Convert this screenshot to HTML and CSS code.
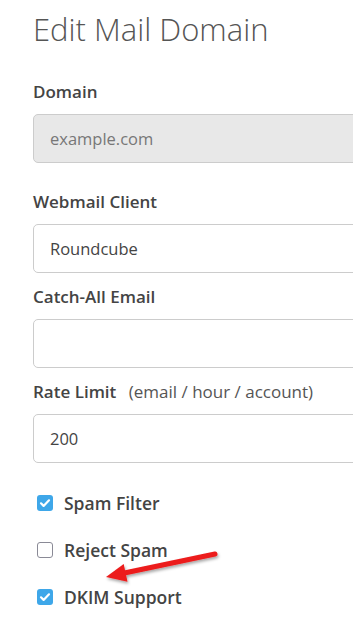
FILE: index.html
```html
<!DOCTYPE html>
<html lang="en">
<head>
  <meta charset="UTF-8" />
  <meta name="viewport" content="width=device-width, initial-scale=1.0" />
  <title>Edit Mail Domain</title>
  <link rel="stylesheet" href="styles.css">
</head>
<body>
  <div class="page">
    <h1>Edit Mail Domain</h1>

    <div class="field field-first">
      <label for="domain">Domain</label>
      <input type="text" id="domain" value="example.com" disabled />
    </div>

    <div class="field field-second">
      <label for="webmail">Webmail Client</label>
      <input type="text" id="webmail" value="Roundcube" />
    </div>

    <div class="field">
      <label for="catchall">Catch-All Email</label>
      <input type="text" id="catchall" value="" />
    </div>

    <div class="field">
      <label for="rate">Rate Limit <span class="hint">(email / hour / account)</span></label>
      <input type="text" id="rate" value="200" />
    </div>

    <div class="checks">
      <label class="check"><span class="box on"><svg viewBox="0 0 16 16"><path d="M4 8.3l2.6 2.6L12 5.3" /></svg></span>Spam Filter</label>
      <label class="check"><span class="box"></span>Reject Spam</label>
      <label class="check"><span class="box on"><svg viewBox="0 0 16 16"><path d="M4 8.3l2.6 2.6L12 5.3" /></svg></span>DKIM Support</label>
    </div>
  </div>

  <svg class="arrow" width="160" height="60" viewBox="0 0 160 60">
    <defs>
      <filter id="shadow" x="-20%" y="-40%" width="140%" height="180%">
        <feDropShadow dx="1" dy="2" stdDeviation="1.5" flood-color="#000" flood-opacity="0.35" />
      </filter>
    </defs>
    <g filter="url(#shadow)">
      <line x1="143" y1="12" x2="50" y2="31.5" stroke="#ec1c1c" stroke-width="5" stroke-linecap="round" />
      <polygon points="34,35 51.7,22.1 55.5,39.7" fill="#ec1c1c" />
    </g>
  </svg>
</body>
</html>
```

FILE: styles.css
```css
html, body {
  margin: 0;
  padding: 0;
  background: #fff;
  overflow: hidden;
}
body {
  font-family: "Open Sans", Arial, sans-serif;
  color: #444;
  position: relative;
  width: 353px;
  height: 626px;
}
.page {
  padding: 0 0 0 33px;
}
h1 {
  font-size: 31px;
  font-weight: 300;
  color: #555;
  margin: 0;
  padding-top: 9px;
  line-height: 40px;
}
.field {
  margin-top: 12px;
}
.field-first {
  margin-top: 31px;
}
.field-second {
  margin-top: 27px;
}
.field label {
  display: block;
  font-size: 17px;
  font-weight: 600;
  line-height: 24px;
  margin-bottom: 10px;
  color: #444;
}
.field .hint {
  font-weight: 400;
  color: #555;
  margin-left: 8px;
}
.field input {
  display: block;
  box-sizing: border-box;
  width: 360px;
  height: 49px;
  padding: 0 16px;
  border: 1px solid #ccc;
  border-radius: 5px;
  font-family: inherit;
  font-size: 16.5px;
  color: #444;
  background: #fff;
}
.field input:disabled {
  background: #e8e8e8;
  color: #777;
}
.checks {
  padding-top: 28px;
  display: flex;
  flex-direction: column;
  gap: 23px;
}
.check {
  display: flex;
  align-items: center;
  height: 24px;
  font-size: 17.5px;
  font-weight: 600;
  color: #444;
}
.box {
  box-sizing: border-box;
  width: 16px;
  height: 16px;
  margin: 0 11px 0 4px;
  border: 1.5px solid #8a8a96;
  border-radius: 3px;
  background: #fff;
}
.box.on {
  border: none;
  background: #3ea7e9;
}
.box svg {
  display: block;
  width: 16px;
  height: 16px;
}
.box path {
  fill: none;
  stroke: #fff;
  stroke-width: 2.2;
  stroke-linecap: round;
  stroke-linejoin: round;
}
.arrow {
  position: absolute;
  left: 72px;
  top: 542px;
}
```
